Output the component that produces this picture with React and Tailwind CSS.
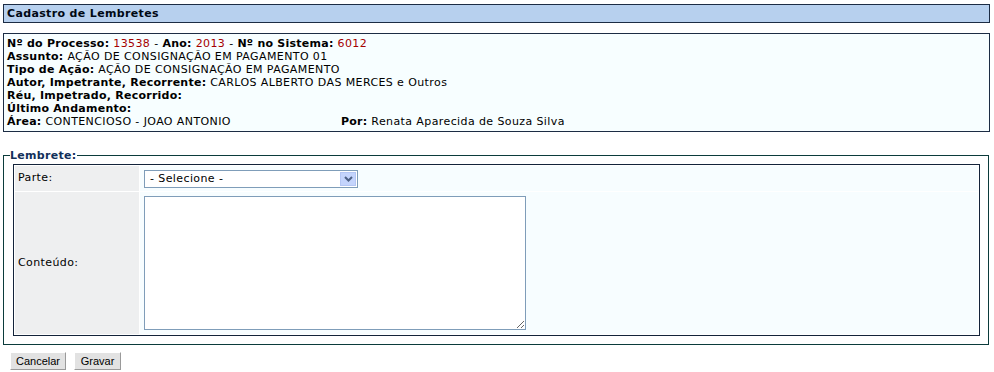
export default function App() {
  const lab = "font-bold tracking-[0.25px]";
  const red = "text-[#a50000]";
  return (
    <div className="pt-[4px] pl-[3px] pr-[4px] font-['DejaVu_Sans',Verdana,sans-serif] text-[11px] tracking-[0.4px] text-black bg-white min-h-[372px]">
      <div className="border border-[#1c2c44] bg-[#b7d0ee] h-[19px] pl-[3px] leading-[17px] font-bold tracking-[0.35px] text-[#000814]">
        Cadastro de Lembretes
      </div>

      <div className="mt-[10px] border border-[#1c2c44] bg-[#f7feff] h-[99px] pl-[3px] pt-[3px] leading-[13px]">
        <div>
          <span className={lab}>Nº do Processo:</span> <span className={red}>13538</span> - <span className={lab}>Ano:</span>{" "}
          <span className={red}>2013</span> - <span className={lab}>Nº no Sistema:</span> <span className={red}>6012</span>
        </div>
        <div>
          <span className={lab}>Assunto:</span> AÇÃO DE CONSIGNAÇÃO EM PAGAMENTO 01
        </div>
        <div>
          <span className={lab}>Tipo de Ação:</span> AÇÃO DE CONSIGNAÇÃO EM PAGAMENTO
        </div>
        <div>
          <span className={lab}>Autor, Impetrante, Recorrente:</span> CARLOS ALBERTO DAS MERCES e Outros
        </div>
        <div>
          <span className={lab}>Réu, Impetrado, Recorrido:</span>
        </div>
        <div>
          <span className={lab}>Último Andamento:</span>
        </div>
        <div className="flex">
          <div className="w-[334px]">
            <span className={lab}>Área:</span> CONTENCIOSO - JOAO ANTONIO
          </div>
          <div>
            <span className={lab}>Por:</span> Renata Aparecida de Souza Silva
          </div>
        </div>
      </div>

      <fieldset className="mt-[17px] mr-[1px] border border-[#0b3b3b] pl-[9px] pr-[8px] pt-[2px] pb-[8px]">
        <legend className="-ml-[3px] font-bold tracking-[0.3px] text-[#12305a] leading-[13px]">Lembrete:</legend>
        <div className="border border-[#13233a] bg-white p-[1px] grid grid-cols-[124px_1fr] gap-[1px]">
          <div className="bg-[#eeeff0] h-[25px] flex items-center pl-[3px]">Parte:</div>
          <div className="bg-[#f7fdff] h-[25px] flex items-center pl-[4px]">
            <div className="w-[214px] h-[18px] border border-[#7f9db9] bg-white flex items-center justify-between pl-[5px] pr-[1px]">
              <span className="leading-[14px]">- Selecione -</span>
              <div className="w-[16px] h-[14px] bg-[#c4d4fc] border border-[#b4c6f4] flex items-center justify-center">
                <svg width="9" height="6" viewBox="0 0 9 6">
                  <path d="M1 1 L4.5 4.5 L8 1" fill="none" stroke="#4d6185" strokeWidth="2" />
                </svg>
              </div>
            </div>
          </div>
          <div className="bg-[#eeeff0] h-[142px] flex items-center pl-[3px]">Conteúdo:</div>
          <div className="bg-[#f7fdff] h-[142px] pl-[4px] pt-[4px]">
            <textarea className="block w-[382px] h-[134px] border border-[#7f9db9] bg-white outline-none" />
          </div>
        </div>
      </fieldset>

      <div className="mt-[7px] pl-[7px] flex gap-[8px] font-['Liberation_Sans',Tahoma,sans-serif] text-[11px] tracking-normal">
        <button className="w-[56px] h-[18px] bg-[#e2e2e2] border border-t-white border-l-white border-r-[#9a9a9a] border-b-[#9a9a9a] leading-[14px]">
          Cancelar
        </button>
        <button className="w-[47px] h-[18px] bg-[#e2e2e2] border border-t-white border-l-white border-r-[#9a9a9a] border-b-[#9a9a9a] leading-[14px]">
          Gravar
        </button>
      </div>
    </div>
  );
}
